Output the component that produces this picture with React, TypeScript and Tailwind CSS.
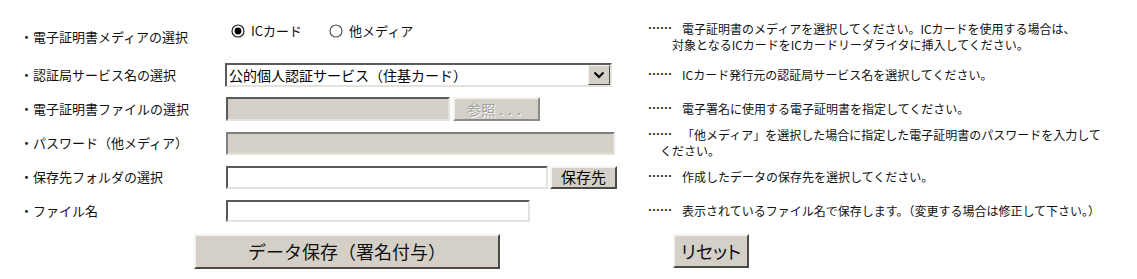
import React from "react";

const inset =
  "border-2 border-t-[#5a5a5a] border-l-[#5a5a5a] border-b-[#e4e2dc] border-r-[#e4e2dc]";
const outset =
  "border-2 border-t-[#f4f3ef] border-l-[#f4f3ef] border-b-[#4a4a4a] border-r-[#4a4a4a]";

function Radio({ checked }: { checked: boolean }) {
  return (
    <svg width="14" height="14" viewBox="0 0 14 14" className="shrink-0">
      <circle cx="7" cy="7" r="6" fill="#fff" stroke={checked ? "#222" : "#555"} strokeWidth="1.2" />
      {checked && <circle cx="7" cy="7" r="3.4" fill="#000" />}
    </svg>
  );
}

function Row({
  h,
  label,
  children,
  help,
}: {
  h: string;
  label: string;
  children: React.ReactNode;
  help: React.ReactNode;
}) {
  return (
    <div className={`grid grid-cols-[225px_423px_1fr] items-center ${h}`}>
      <div className="pl-[20px] text-[13px] text-[#111] whitespace-nowrap">{label}</div>
      <div className="flex items-center">{children}</div>
      <div className="text-[12px] leading-[16px] text-[#111] whitespace-nowrap">{help}</div>
    </div>
  );
}

const Dots = () => (
  <span className="inline-block w-[34px] relative -top-[1px] font-bold">……</span>
);

export default function App() {
  return (
    <div className="w-[1137px] h-[279px] bg-white font-['Noto_Sans_CJK_JP','Noto_Sans',sans-serif] pt-[16px] overflow-hidden">
      <Row
        h="h-[42px]"
        label="・電子証明書メディアの選択"
        help={
          <>
            <Dots />
            電子証明書のメディアを選択してください。ICカードを使用する場合は、
            <br />
            <span className="pl-[24px]">対象となるICカードをICカードリーダライタに挿入してください。</span>
          </>
        }
      >
        <div className="flex items-center self-start -mt-[12px] text-[13px] text-[#111]">
          <span className="ml-[6px] flex items-center gap-[6px]">
            <Radio checked />
            ICカード
          </span>
          <span className="ml-[27px] flex items-center gap-[6px]">
            <Radio checked={false} />
            他メディア
          </span>
        </div>
      </Row>

      <Row h="h-[34px]" label="・認証局サービス名の選択" help={<><Dots />ICカード発行元の認証局サービス名を選択してください。</>}>
        <div className={`w-[387px] h-[24px] bg-white flex items-center ${inset}`}>
          <span className="flex-1 pl-[2px] text-[14px] leading-none text-black">
            公的個人認証サービス（住基カード）
          </span>
          <div className={`w-[22px] h-[20px] bg-[#d4d0c8] flex items-center justify-center ${outset} border-[1px]`}>
            <svg width="12" height="8" viewBox="0 0 12 8">
              <path d="M1.5 1.5 L6 6 L10.5 1.5" fill="none" stroke="#000" strokeWidth="2" />
            </svg>
          </div>
        </div>
      </Row>

      <Row h="h-[34px]" label="・電子証明書ファイルの選択" help={<><Dots />電子署名に使用する電子証明書を指定してください。</>}>
        <div className={`ml-[1px] w-[224px] h-[24px] bg-[#d4d0c8] ${inset}`} />
        <div
          className={`ml-[3px] w-[87px] h-[24px] bg-[#d4d0c8] flex items-center justify-center text-[14px] text-[#a19f9a] [text-shadow:1px_1px_0_#fff] ${outset} border-b-[#8a8a8a] border-r-[#8a8a8a]`}
        >
          参照<span className="tracking-[5px] ml-[4px]">...</span>
        </div>
      </Row>

      <Row
        h="h-[34px]"
        label="・パスワード（他メディア）"
        help={
          <>
            <Dots />
            「他メディア」を選択した場合に指定した電子証明書のパスワードを入力して
            <br />
            <span className="pl-[12px]">ください。</span>
          </>
        }
      >
        <div className={`ml-[1px] w-[389px] h-[23px] bg-[#d4d0c8] ${inset} border-t-[#808080] border-l-[#808080]`} />
      </Row>

      <Row h="h-[34px]" label="・保存先フォルダの選択" help={<><Dots />作成したデータの保存先を選択してください。</>}>
        <div className={`ml-[1px] w-[322px] h-[23px] bg-white ${inset}`} />
        <div
          className={`ml-[2px] w-[67px] h-[23px] bg-[#d4d0c8] flex items-center justify-center text-[15px] text-black ${outset}`}
        >
          保存先
        </div>
      </Row>

      <Row h="h-[34px]" label="・ファイル名" help={<><Dots />表示されているファイル名で保存します。（変更する場合は修正して下さい。）</>}>
        <div className={`ml-[1px] w-[304px] h-[22px] bg-white ${inset}`} />
      </Row>

      <div className="flex items-start mt-[6px] pl-[194px]">
        <div
          className={`w-[306px] h-[35px] bg-[#d4d0c8] flex items-center justify-center text-[18px] text-[#111] ${outset}`}
        >
          データ保存（署名付与）
        </div>
        <div
          className={`ml-[173px] w-[76px] h-[34px] bg-[#d4d0c8] flex items-center justify-center text-[18px] text-[#111] [font-feature-settings:'palt'] ${outset}`}
        >
          リセット
        </div>
      </div>
    </div>
  );
}
